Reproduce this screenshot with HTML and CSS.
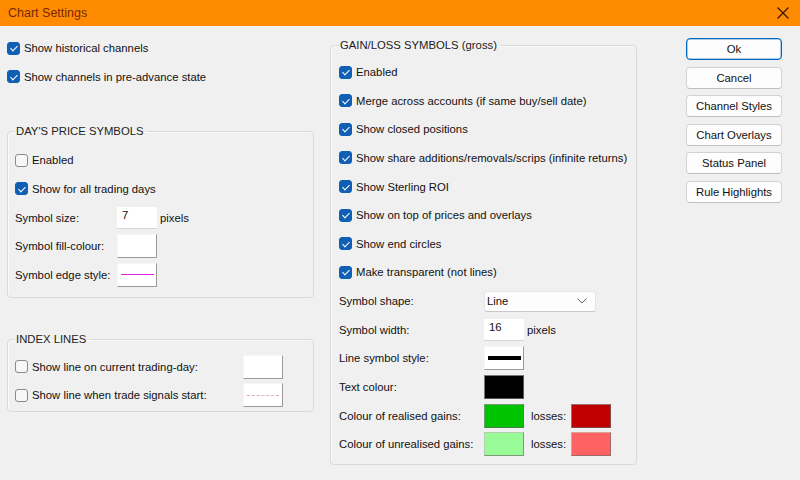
FILE: index.html
```html
<!DOCTYPE html>
<html>
<head>
<meta charset="utf-8">
<title>Chart Settings</title>
<link rel="stylesheet" href="styles.css">
</head>
<body>
<div class="titlebar">
  <span class="title">Chart Settings</span>
  <span class="close"><svg width="14" height="14" viewBox="0 0 14 14"><path d="M1.5 1.5 L12.5 12.5 M12.5 1.5 L1.5 12.5" stroke="#3a1800" stroke-width="1.3" fill="none"/></svg></span>
</div>
<div class="main">
  <div class="col-left">
    <div class="row"><span class="cb on"></span>Show historical channels</div>
    <div class="row"><span class="cb on"></span>Show channels in pre-advance state</div>
    <fieldset class="group g1">
      <legend>DAY'S PRICE SYMBOLS</legend>
      <div class="row"><span class="cb"></span>Enabled</div>
      <div class="row"><span class="cb on"></span>Show for all trading days</div>
      <div class="row"><span class="lbl l1">Symbol size:</span><span class="textbox">7</span><span class="unit">pixels</span></div>
      <div class="row"><span class="lbl l1">Symbol fill-colour:</span><span class="swatch raised"></span></div>
      <div class="row"><span class="lbl l1">Symbol edge style:</span><span class="swatch raised"><span class="line magenta"></span></span></div>
    </fieldset>
    <fieldset class="group g2">
      <legend>INDEX LINES</legend>
      <div class="row r2"><span class="cb"></span><span class="lbl l2">Show line on current trading-day:</span><span class="swatch raised"></span></div>
      <div class="row r2"><span class="cb"></span><span class="lbl l2">Show line when trade signals start:</span><span class="swatch raised"><span class="line dashed"></span></span></div>
    </fieldset>
  </div>
  <div class="col-mid">
    <fieldset class="group g3">
      <legend>GAIN/LOSS SYMBOLS (gross)</legend>
      <div class="row"><span class="cb on"></span>Enabled</div>
      <div class="row"><span class="cb on"></span>Merge across accounts (if same buy/sell date)</div>
      <div class="row"><span class="cb on"></span>Show closed positions</div>
      <div class="row"><span class="cb on"></span>Show share additions/removals/scrips (infinite returns)</div>
      <div class="row"><span class="cb on"></span>Show Sterling ROI</div>
      <div class="row"><span class="cb on"></span>Show on top of prices and overlays</div>
      <div class="row"><span class="cb on"></span>Show end circles</div>
      <div class="row"><span class="cb on"></span>Make transparent (not lines)</div>
      <div class="row"><span class="lbl l3">Symbol shape:</span><span class="select"><span>Line</span><svg width="10" height="6" viewBox="0 0 10 6"><path d="M0.5 0.5 L5 5 L9.5 0.5" stroke="#666" stroke-width="1" fill="none"/></svg></span></div>
      <div class="row"><span class="lbl l3">Symbol width:</span><span class="textbox">16</span><span class="unit">pixels</span></div>
      <div class="row"><span class="lbl l3">Line symbol style:</span><span class="swatch raised"><span class="line thick"></span></span></div>
      <div class="row"><span class="lbl l3">Text colour:</span><span class="swatch black"></span></div>
      <div class="row"><span class="lbl l3">Colour of realised gains:</span><span class="swatch green"></span><span class="lbl l4">losses:</span><span class="swatch red"></span></div>
      <div class="row"><span class="lbl l3">Colour of unrealised gains:</span><span class="swatch lgreen"></span><span class="lbl l4">losses:</span><span class="swatch lred"></span></div>
    </fieldset>
  </div>
  <div class="col-right">
    <div class="btn default">Ok</div>
    <div class="btn">Cancel</div>
    <div class="btn">Channel Styles</div>
    <div class="btn">Chart Overlays</div>
    <div class="btn">Status Panel</div>
    <div class="btn">Rule Highlights</div>
  </div>
</div>
</body>
</html>
```
FILE: styles.css
```css
* { box-sizing: border-box; }
html, body { margin: 0; padding: 0; }
body {
  width: 800px;
  height: 480px;
  overflow: hidden;
  background: #f0f0f0;
  font-family: "Liberation Sans", Arial, sans-serif;
  font-size: 11.3px;
  color: #111;
}
.titlebar {
  height: 26px;
  background: #ff8c00;
  display: flex;
  align-items: center;
  justify-content: space-between;
  padding: 0 10px 1px 8px;
}
.title {
  font-size: 12.5px;
  color: #7a2608;
}
.close { display: flex; align-items: center; }
.main {
  display: flex;
  align-items: flex-start;
}
.col-left {
  width: 307px;
  margin-left: 7px;
  padding-top: 7.7px;
  display: flex;
  flex-direction: column;
}
.col-mid {
  width: 307px;
  margin-left: 16px;
  padding-top: 12px;
}
.col-right {
  width: 96px;
  margin-left: 49px;
  padding-top: 12px;
  display: flex;
  flex-direction: column;
  gap: 6.6px;
}
.row {
  height: 28.65px;
  display: flex;
  align-items: center;
  white-space: nowrap;
}
.r2 { height: 28.3px; }
.group {
  margin: 0;
  border: 1px solid #d9d9d9;
  border-radius: 4px;
  min-width: 0;
  width: 307px;
  box-shadow: inset 1px 1px 0 #fafafa;
}
.group legend {
  padding: 0 3px 0 1px;
  line-height: 14px;
  color: #222;
}
.g1 { margin-top: 33.5px; padding: 7.5px 7px 8px 7px; }
.g2 { margin-top: 34px; padding: 6.5px 7px 1.5px 7px; }
.g3 { padding: 5.7px 8px 5.5px 8px; }
.cb {
  width: 13px;
  height: 13px;
  border-radius: 3px;
  margin-right: 4px;
  flex: none;
  border: 1px solid #8a8a8a;
  background: #f7f7f7;
  position: relative;
}
.cb.on {
  background: #0f5fb5;
  border-color: #0f5fb5;
}
.cb.on::after {
  content: "";
  position: absolute;
  left: 3.5px;
  top: 1.5px;
  width: 3px;
  height: 6px;
  border-right: 1.2px solid #fff;
  border-bottom: 1.2px solid #fff;
  transform: rotate(45deg);
}
.lbl { flex: none; }
.l1 { width: 102px; }
.l2 { width: 211px; }
.l3 { width: 145px; }
.l4 { width: 40px; margin-left: 7px; }
.unit { margin-left: 3px; }
.textbox {
  width: 40px;
  height: 22px;
  background: #fff;
  border-bottom: 1px solid #d6d6d6;
  padding: 2px 0 0 5px;
  display: flex;
  align-items: flex-start;
}
.swatch {
  width: 40px;
  height: 24px;
  flex: none;
  display: flex;
  align-items: center;
  justify-content: center;
  border: 1px solid #b0b0b0;
  border-top-color: #e8e8e8;
  border-left-color: #e8e8e8;
}
.swatch.raised {
  background: #fff;
  border-color: #f6f6f6 #9a9a9a #9a9a9a #f6f6f6;
}
.black { background: #000; border-color: #777 #555 #555 #777; }
.green { background: #00c400; border-color: #70a070 #4a804a #4a804a #70a070; }
.red { background: #c00000; border-color: #a07070 #804a4a #804a4a #a07070; }
.lgreen { background: #98fb98; border-color: #b0d0b0 #7a9a7a #7a9a7a #b0d0b0; }
.lred { background: #ff6262; border-color: #e0a0a0 #a06a6a #a06a6a #e0a0a0; }
.line { display: block; width: 33px; }
.magenta { border-top: 1.5px solid #e020e0; }
.dashed { border-top: 1px dashed #d8b0b0; width: 32px; }
.thick { border-top: 4px solid #000; }
.select {
  width: 112px;
  height: 21px;
  background: #fdfdfd;
  border: 1px solid #e4e4e4;
  border-bottom-color: #c8c8c8;
  border-radius: 3px;
  display: flex;
  align-items: center;
  justify-content: space-between;
  padding: 0 8px 0 2px;
}
.btn {
  height: 22px;
  border: 1px solid #d2d2d2;
  border-bottom-color: #c0c0c0;
  border-radius: 4px;
  background: #fdfdfd;
  display: flex;
  align-items: center;
  justify-content: center;
}
.btn.default {
  border: 1px solid #0067c0;
  box-shadow: inset 0 0 0 0.5px #5a9ad8;
}
```
